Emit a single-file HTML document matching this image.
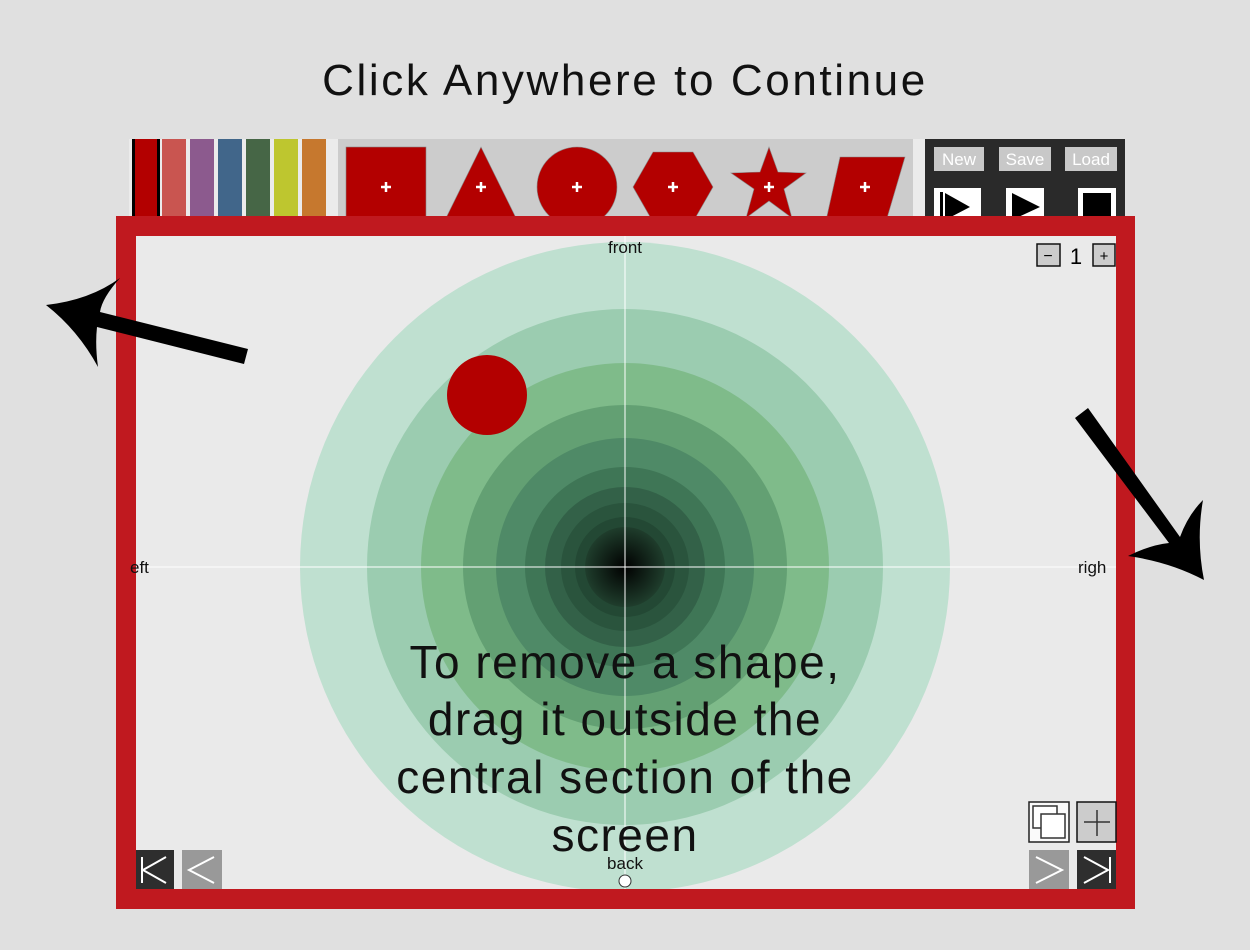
<!DOCTYPE html>
<html><head><meta charset="utf-8"><style>
html,body{margin:0;padding:0;background:#e0e0e0;width:1250px;height:950px;overflow:hidden;font-family:"Liberation Sans",sans-serif}
</style></head><body>
<svg width="1250" height="950" viewBox="0 0 1250 950" xmlns="http://www.w3.org/2000/svg" font-family="Liberation Sans, sans-serif">
<rect width="1250" height="950" fill="#e0e0e0"/>
<text x="625" y="95" font-size="44" letter-spacing="2.6" text-anchor="middle" fill="#111">Click Anywhere to Continue</text>
<!-- palette -->
<rect x="129" y="139" width="209" height="80" fill="#ebebeb"/>
<rect x="132" y="139" width="28" height="80" fill="#000"/>
<rect x="135" y="139" width="22" height="80" fill="#b30000"/>
<rect x="162" y="139" width="24" height="80" fill="#c95550"/>
<rect x="190" y="139" width="24" height="80" fill="#8c5a8e"/>
<rect x="218" y="139" width="24" height="80" fill="#41668a"/>
<rect x="246" y="139" width="24" height="80" fill="#466646"/>
<rect x="274" y="139" width="24" height="80" fill="#bec62f"/>
<rect x="302" y="139" width="24" height="80" fill="#c6782e"/>
<!-- shapes -->
<rect x="338" y="139" width="575" height="80" fill="#cccccc"/>
<rect x="913" y="139" width="12" height="80" fill="#ebebeb"/>
<g fill="#b30000" stroke="#888" stroke-width="0.6">
<rect x="346" y="147" width="80" height="75"/>
<polygon points="481,147 518,222 444,222"/>
<circle cx="577" cy="187" r="40"/>
<polygon points="653,152 693,152 713,187 693,222 653,222 633,187"/>
<polygon points="769,147 778,172 806,173 784,189 792,218 769,201 746,218 754,189 731,173 760,172"/>
<polygon points="840,157 905,157 885,225 825,225"/>
</g>
<g stroke="#fff" stroke-width="2.5">
<path d="M381,187 H391 M386,182 V192"/><path d="M476,187 H486 M481,182 V192"/><path d="M572,187 H582 M577,182 V192"/><path d="M668,187 H678 M673,182 V192"/><path d="M764,187 H774 M769,182 V192"/><path d="M860,187 H870 M865,182 V192"/>
</g>
<!-- dark panel -->
<rect x="925" y="139" width="200" height="80" fill="#2a2a2a"/>
<g fill="#c8c8c8"><rect x="934" y="147" width="50" height="24"/><rect x="999" y="147" width="52" height="24"/><rect x="1065" y="147" width="52" height="24"/></g>
<g fill="#fff" font-size="17" text-anchor="middle"><text x="959" y="165">New</text><text x="1025" y="165">Save</text><text x="1091" y="165">Load</text></g>
<g fill="#fff"><rect x="934" y="188" width="47" height="30"/><rect x="1006" y="188" width="38" height="30"/><rect x="1078" y="188" width="38" height="30"/></g>
<rect x="940" y="192" width="3" height="26" fill="#000"/>
<polygon points="945,193 970,207 945,220" fill="#000"/>
<polygon points="1012,193 1040,207 1012,220" fill="#000"/>
<rect x="1083" y="193" width="28" height="25" fill="#000"/>
<!-- frame -->
<rect x="116" y="216" width="1019" height="693" fill="#c0191f"/>
<rect x="136" y="236" width="980" height="653" fill="#eaeaea"/>
<defs><clipPath id="c"><rect x="136" y="236" width="980" height="653"/></clipPath>
<radialGradient id="g" cx="0.5" cy="0.5" r="0.5"><stop offset="0" stop-color="#000"/><stop offset="1" stop-color="#1f3d2c"/></radialGradient></defs>
<g clip-path="url(#c)">
<circle cx="625" cy="567" r="325" fill="#bfe0d0"/>
<circle cx="625" cy="567" r="258" fill="#9bccb0"/>
<circle cx="625" cy="567" r="204" fill="#7fbb8a"/>
<circle cx="625" cy="567" r="162" fill="#63a073"/>
<circle cx="625" cy="567" r="129" fill="#4f8a67"/>
<circle cx="625" cy="567" r="100" fill="#3f7656"/>
<circle cx="625" cy="567" r="80" fill="#336148"/>
<circle cx="625" cy="567" r="64" fill="#2a543d"/>
<circle cx="625" cy="567" r="50" fill="#234834"/>
<circle cx="625" cy="567" r="40" fill="url(#g)"/>
<line x1="136" y1="567" x2="1116" y2="567" stroke="#fff" stroke-width="1"/>
<line x1="625" y1="236" x2="625" y2="889" stroke="#fff" stroke-width="1"/>
</g>
<circle cx="487" cy="395" r="40" fill="#b30000"/>
<g font-size="17" fill="#111">
<text x="625" y="253" text-anchor="middle">front</text>
<text x="625" y="869" text-anchor="middle">back</text>
<text x="130" y="573">eft</text>
<text x="1078" y="573">righ</text>
</g>
<circle cx="625" cy="881" r="6" fill="#fff" stroke="#333"/>
<!-- zoom -->
<rect x="1037" y="244" width="23" height="22" fill="#ccc" stroke="#111" stroke-width="1.5"/>
<text x="1048" y="261" font-size="16" text-anchor="middle">−</text>
<text x="1076" y="264" font-size="22" text-anchor="middle">1</text>
<rect x="1093" y="244" width="22" height="22" fill="#ccc" stroke="#111" stroke-width="1.5"/>
<text x="1104" y="261" font-size="15" text-anchor="middle">+</text>
<!-- bottom buttons -->
<rect x="1029" y="802" width="40" height="40" fill="#fafafa" stroke="#222" stroke-width="1.5"/>
<rect x="1033" y="806" width="24" height="22" fill="#fff" stroke="#333" stroke-width="1.5"/>
<rect x="1041" y="814" width="24" height="24" fill="#fff" stroke="#333" stroke-width="1.5"/>
<rect x="1077" y="802" width="39" height="40" fill="#ccc" stroke="#111" stroke-width="1.5"/>
<path d="M1097,810 V836 M1084,822 H1110" stroke="#333" stroke-width="1.5"/>
<rect x="1029" y="850" width="40" height="39" fill="#999"/>
<path d="M1036,857 L1062,870 L1036,883" stroke="#fff" stroke-width="2" fill="none"/>
<rect x="1077" y="850" width="39" height="39" fill="#2e2e2e"/>
<path d="M1084,857 L1108,870 L1084,883 M1110,857 V883" stroke="#fff" stroke-width="2" fill="none"/>
<rect x="136" y="850" width="38" height="39" fill="#2e2e2e"/>
<path d="M142,857 V883 M166,857 L143,870 L166,883" stroke="#fff" stroke-width="2" fill="none"/>
<rect x="182" y="850" width="40" height="39" fill="#999"/>
<path d="M214,857 L189,870 L214,883" stroke="#fff" stroke-width="2" fill="none"/>
<!-- message -->
<g font-size="46" letter-spacing="1.5" fill="#111" text-anchor="middle">
<text x="625" y="678">To remove a shape,</text>
<text x="625" y="735">drag it outside the</text>
<text x="625" y="793">central section of the</text>
<text x="625" y="851">screen</text>
</g>
<!-- arrows -->
<path d="M46,305 Q90,300 120,278 Q102,298 100,312 L248,349 L244,364 L97,327 Q95,345 98,367 Q78,330 46,305 Z" fill="#000"/>
<path d="M1075,418 L1088,408 L1180,537 Q1188,515 1203,500 Q1196,540 1204,580 Q1170,562 1128,556 Q1150,545 1169,543 Z" fill="#000"/>
</svg>
</body></html>
